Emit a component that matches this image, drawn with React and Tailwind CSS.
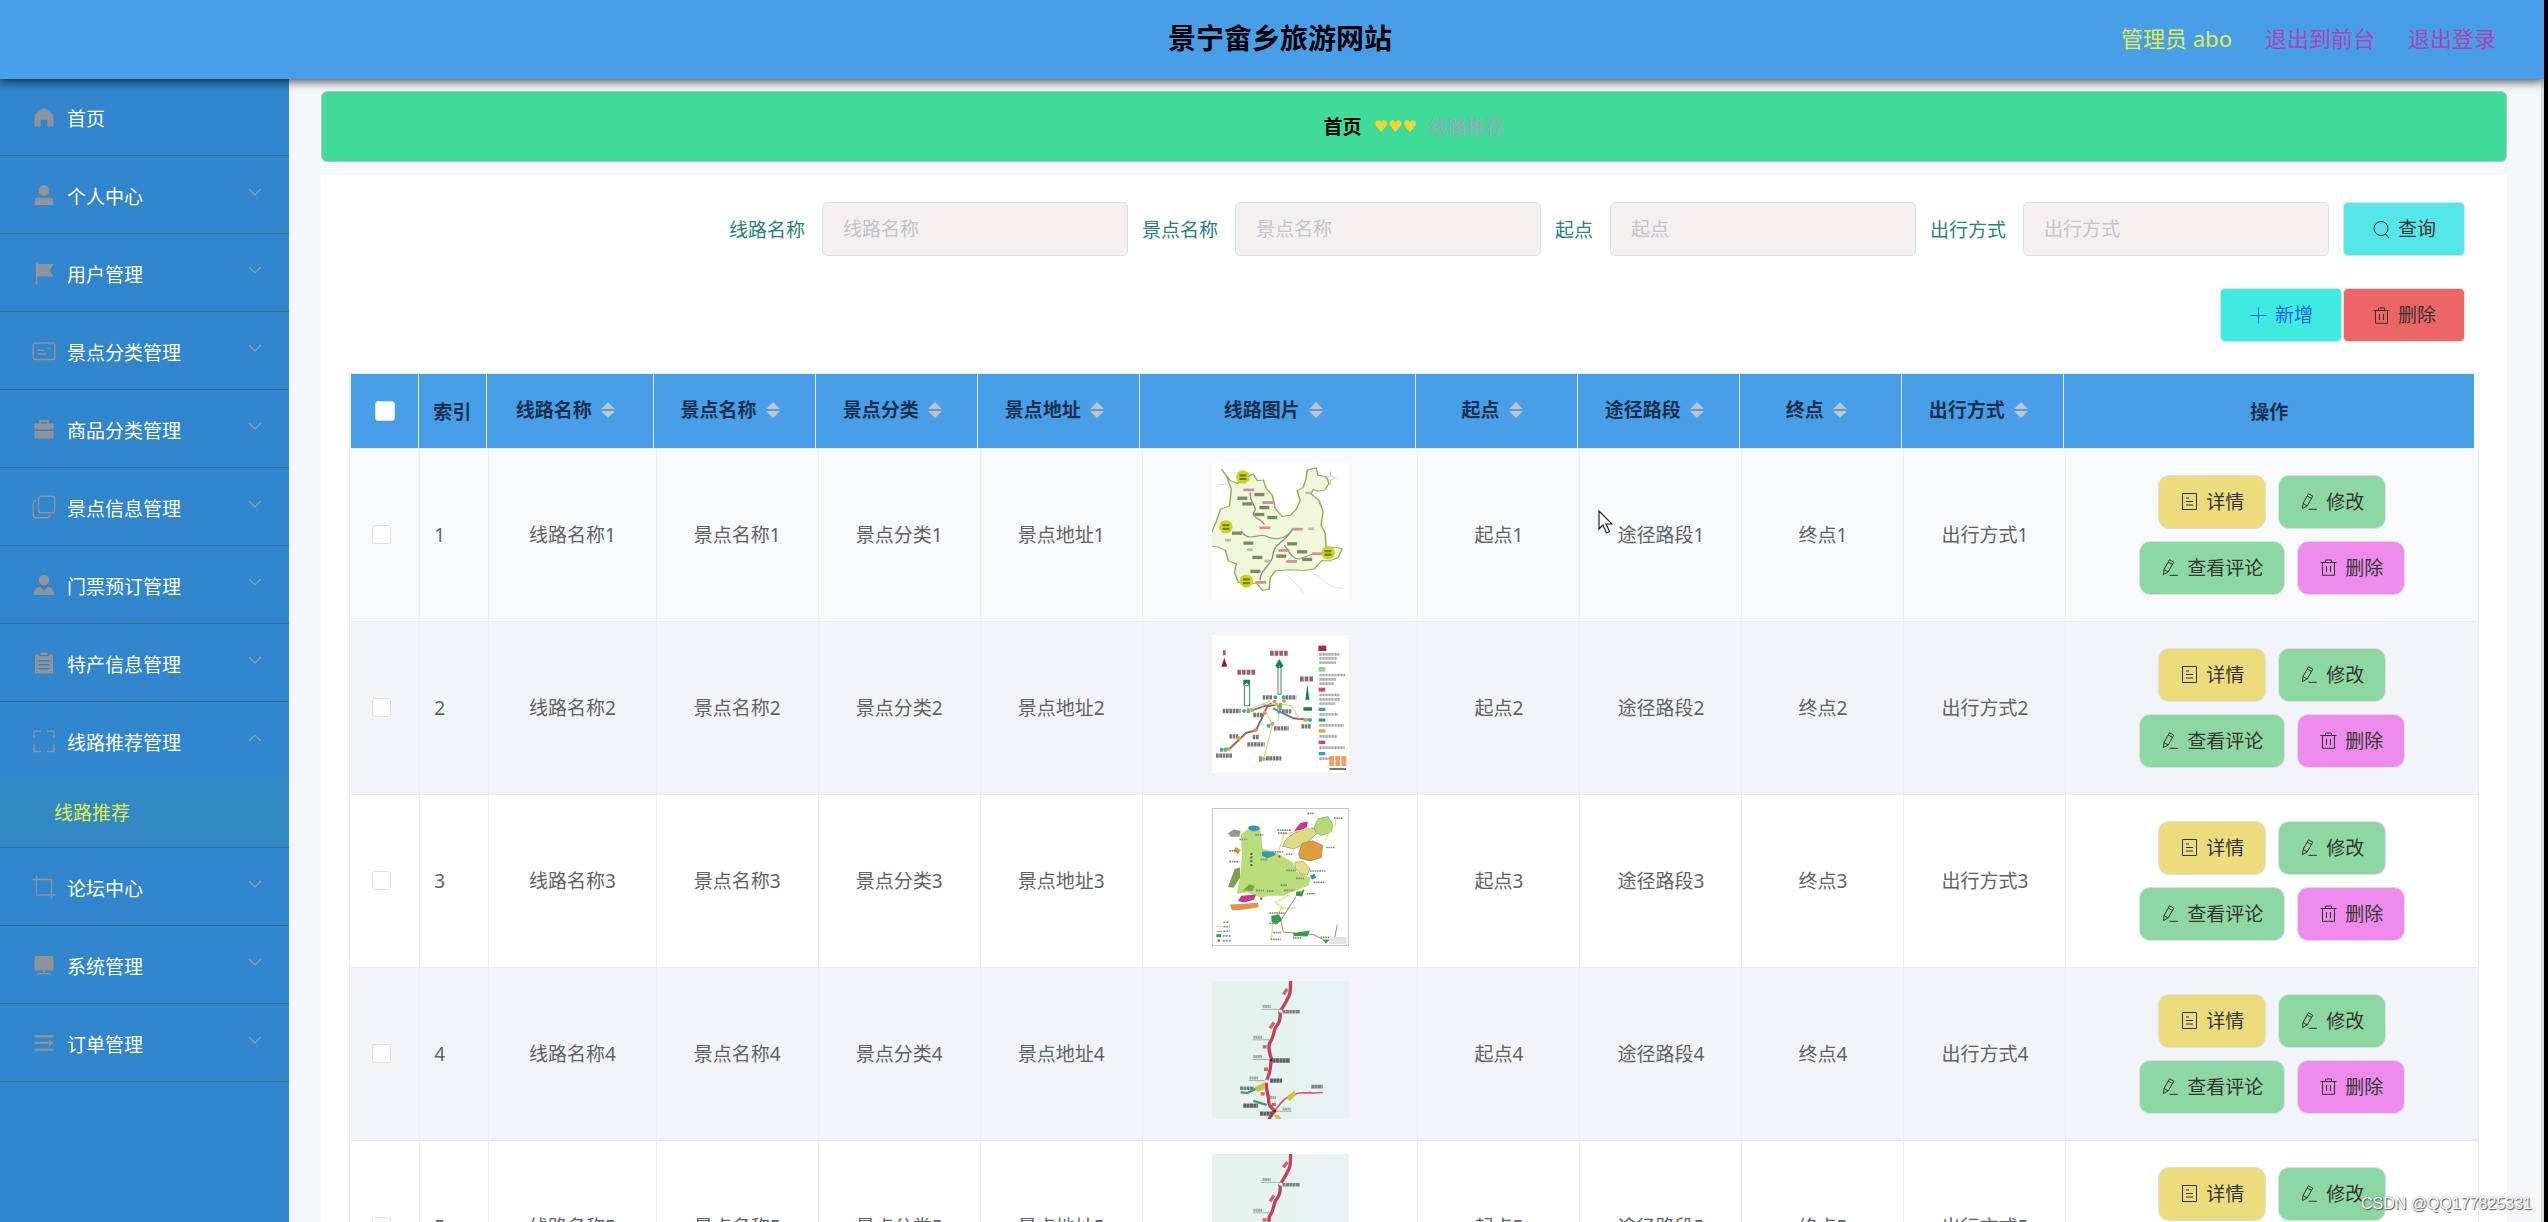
import React, { useState } from 'react';

const ICONS = {
  home: <path fill="currentColor" d="M12 2.5 21.5 10v11.5h-6.2v-6.8H8.700v6.800H2.500V10z" />,
  user: (
    <g fill="currentColor">
      <circle cx="12" cy="7.500" r="5.500" />
      <path d="M2.500 22v-3.500a4 4 0 0 1 4-4h11a4 4 0 0 1 4 4V22z" />
    </g>
  ),
  flag: <path fill="currentColor" d="M3.800 1.200h1.700V3h16l-3.800 6.500 3.800 6h-16v8H3.800z" />,
  postcard: (
    <g fill="none" stroke="currentColor" strokeWidth="1.400">
      <rect x="1.200" y="4" width="21.600" height="16.500" rx="2" />
      <path d="M6 11.200h6.500M6 15h9M15.500 9.200h3" />
    </g>
  ),
  briefcase: (
    <g fill="currentColor">
      <path d="M2.500 6.500H7V3h10v3.500h4.500v6h-19zM9 5v1.500h6V5z" fillRule="evenodd" />
      <path d="M2.500 14h19v7.500h-19z" />
    </g>
  ),
  copy: (
    <g fill="none" stroke="currentColor" strokeWidth="1.400">
      <rect x="6.500" y="1.200" width="16.200" height="16.500" rx="2.500" />
      <path d="M4.500 5.500c-2 0-3.200 1-3.200 2.800v11.400c0 2 1 3 3 3h10.500c2 0 3-1 3.200-2.500" />
    </g>
  ),
  custom: (
    <g fill="currentColor">
      <circle cx="12" cy="7" r="5.200" />
      <path d="M1.500 22c.3-4.500 2.800-7.600 6.300-8.600L12 17.500l4.200-4.100c3.500 1 6 4.100 6.300 8.600z" />
    </g>
  ),
  order: (
    <path
      fill="currentColor"
      fillRule="evenodd"
      d="M8.500 1.500h7V4h-7zM3 3.500h4.200v1.700h9.600V3.500H21v19H3zM6.500 9v1.500h11V9zM6.500 13v1.500h11V13zM6.500 17v1.500h11V17z"
    />
  ),
  fullscreen: (
    <path fill="none" stroke="currentColor" strokeWidth="1.500" d="M2 9V2.200h7M15 2.200h7V9M22 15.500v7h-7M9 22.500H2v-7" />
  ),
  crop: <path fill="none" stroke="currentColor" strokeWidth="1.400" d="M0.500 4.500h19V23.500M4.500 0.500v19.500h19" />,
  platform: <path fill="currentColor" d="M2.500 3h19v14.500h-19zM11 17.500h2v2.300h-2zM5.500 20h13v1.600h-13z" />,
  unfold: (
    <path fill="currentColor" d="M2.500 4h19v2.400h-19zM2.500 10.800h14V13h-14zM2.500 17.600h19V20h-19zM16.800 8.300l4.700 3.600-4.700 3.600z" />
  ),
};

const MENU = [
  { label: '首页', icon: 'home', leaf: true },
  { label: '个人中心', icon: 'user' },
  { label: '用户管理', icon: 'flag' },
  { label: '景点分类管理', icon: 'postcard' },
  { label: '商品分类管理', icon: 'briefcase' },
  { label: '景点信息管理', icon: 'copy' },
  { label: '门票预订管理', icon: 'custom' },
  { label: '特产信息管理', icon: 'order' },
  { label: '线路推荐管理', icon: 'fullscreen', children: ['线路推荐'] },
  { label: '论坛中心', icon: 'crop' },
  { label: '系统管理', icon: 'platform' },
  { label: '订单管理', icon: 'unfold' },
];

const FILTERS = ['线路名称', '景点名称', '起点', '出行方式'];

const COLUMNS = ['线路名称', '景点名称', '景点分类', '景点地址', '线路图片', '起点', '途径路段', '终点', '出行方式'];

const ROWS = [
  { id: 1, map: 'province', bg: 'bg-[#f8f9fd]' },
  { id: 2, map: 'transit', bg: 'bg-[#f3f4fa]' },
  { id: 3, map: 'park', bg: 'bg-white' },
  { id: 4, map: 'road', bg: 'bg-[#f3f4fa]' },
  { id: 5, map: 'road', bg: 'bg-white' },
];

const Icon = ({ name, className }) => (
  <svg viewBox="0 0 24 24" className={className} aria-hidden="true">{ICONS[name]}</svg>
);

const Chevron = ({ up }) => (
  <svg viewBox="0 0 14 8" className="mb-1.5 h-2 w-3.5 text-[#86a5c0]" fill="none" stroke="currentColor" strokeWidth="1.200" aria-hidden="true">
    {up ? <path d="M1 7l6-6 6 6" /> : <path d="M1 1l6 6 6-6" />}
  </svg>
);

// Thin line icons used inside buttons
const LINE_PATHS = {
  search: <><circle cx="9" cy="8.500" r="7" /><path d="M13.500 14l3.500 3.800" /></>,
  plus: <path d="M9.500 1.500v16M1.500 9.500h16" />,
  trash: <path d="M1.500 4.500h16M6.500 4.500V2h6v2.500M3.500 4.500v12.800h12V4.500M7.500 8v6M11.500 8v6" />,
  doc: <path d="M2.500 1.500h14v16h-14zM6 6h3M6 9.500h7M6 13h7" />,
  edit: <path d="M3 11.500 8.500 1.700l4.300 2.500-5.600 9.700-4.700 2.700zM7.200 4l4.300 2.500M3 11.500l4.200 2.400M8.500 17.300h8.500" />,
};

const LineIcon = ({ name }) => (
  <svg viewBox="0 0 19 19" className="h-[19px] w-[19px] shrink-0" fill="none" stroke="currentColor" aria-hidden="true">
    {LINE_PATHS[name]}
  </svg>
);

const ToolButton = ({ icon, className, children }) => (
  <button type="button" className={`flex h-[54px] items-center gap-[7px] rounded-[5px] border border-[#dcdfe6] px-7 ${className}`}>
    <LineIcon name={icon} />
    {children}
  </button>
);

const RowButton = ({ icon, className, children }) => (
  <button type="button" className={`flex h-[54px] items-center gap-[7px] rounded-[11px] border border-[#dcdfe6] px-[21px] text-[#333] ${className}`}>
    <LineIcon name={icon} />
    {children}
  </button>
);

// Blocks that stand for the tiny place labels on the maps
const Marks = ({ items, w, h, fill }) => items.map(([x, y], i) => (
  <rect key={i} x={x} y={y} width={w} height={h} fill={fill} />
));

const ProvinceMap = () => (
  <svg viewBox="185 332 275 415" preserveAspectRatio="none" className="h-full w-full" aria-hidden="true">
    <rect x="185" y="332" width="275" height="415" fill="#fff" />
    <path
      d="M222 388l14 8 12-14 20-14 8 20 12-2 6 26 12 20 6 40 14 24 16-4 12-18 8-26-6-30 12-10 6-26 2-26 18-6 4 22 16 4 6 20-8 20-16 4-8-6-4 14 16 20 8 34-4 40 8 24 2 42 20 0 12 6-8 26-18 10-14-2-16 26-20 4-30-2-28 4-10 20-2 34-14 4-12-22-16 4-20-6-8-30 4-26-16-8-6-32-14-10-20-4-4-20 8-14 12-40 8-36 18-10 4-50-10-40-10-20z"
      fill="#f0f7da" stroke="#86b45a" strokeWidth="3"
    />
    <path d="M262 424c-4 30 18 44 6 62 2 20 14 12 22 34M244 540c16 34 30 6 48 14 22 16 42 10 56-22-20 50-40 40-42 90-10 30-26 40-24 66M330 582c10 20 16 42 30 42l32-18" fill="none" stroke="#8f8f88" strokeWidth="3" />
    <path d="M336 672c10 20 24 30 32 54M390 668c16 10 20 40 58 44M198 400l24-2" fill="none" stroke="#c4c4c4" strokeWidth="1.500" />
    <Marks items={[[236, 436], [246, 453], [270, 425], [280, 464], [270, 485], [296, 494], [225, 541], [248, 571], [266, 614], [314, 610], [336, 573], [356, 597], [366, 620], [262, 656]]} w={20} h={10} fill="#7b8963" />
    <Marks items={[[248, 412], [286, 450], [280, 526], [345, 530], [318, 594], [334, 627], [385, 604], [272, 690]]} w={22} h={8} fill="#d68a9a" />
    <Marks items={[[211, 563], [255, 592], [372, 421], [378, 529], [290, 626]]} w={12} h={8} fill="#b8bdb0" />
    {[[247, 377], [213, 527], [418, 605], [254, 690]].map(([x, y]) => (
      <g key={x}>
        <ellipse cx={x} cy={y} rx="13.500" ry="20" fill="#ccd41c" />
        <path d={`M${x - 7} ${y - 5}h14M${x - 7} ${y + 6}h14`} stroke="#7a8018" strokeWidth="7" />
      </g>
    ))}
    <path d="M423 360v40M410 380h26" stroke="#aaa" strokeWidth="1.500" />
    <circle cx="423" cy="380" r="6" fill="#fff" stroke="#999" />
  </svg>
);

const TransitMap = () => (
  <svg viewBox="66 42 411 414" className="h-full w-full" preserveAspectRatio="none" aria-hidden="true">
    <rect x="66" y="42" width="411" height="414" fill="#fff" />
    <path d="M118 384l50-48 30-8 34-72 32-6M186 268l60-20M250 262l60 30 45 4" fill="none" stroke="#8b6a86" strokeWidth="6" />
    <path d="M222 408l26-98-34-60 60 0 30 4 24 40M264 262l2 40M180 264l60-24" fill="none" stroke="#c8cc7e" strokeWidth="3" />
    <path d="M163 194h16v60h-16zM264 140h9v80h-9z" fill="#fff" stroke="#3e8a64" strokeWidth="3" />
    <path d="M160 176h20v18l-10-8-10 8zM268 114l12 20-6 8-6-6-6 6-6-8zM352 190l6 46h-12zM340 259h26v10h-26z" fill="#14804c" />
    <path d="M103 110l9 27H94z" fill="#7c2630" />
    <path d="M240 97h56M142 154h54M330 174h42M99 95h8" stroke="#9a606a" strokeWidth="15" strokeDasharray="11 3" />
    <path d="M98 270h54M190 282h28M218 229h30M287 229h32M276 271h28M252 322h44M334 316h30M118 346h26M188 348h18M172 370h52M78 404h50M228 412h46" stroke="#777" strokeWidth="13" strokeDasharray="8 2" />
    <g fill="#e5a02c">
      {[[254, 242], [282, 240], [186, 268], [224, 276], [196, 328], [147, 352], [115, 384], [247, 308], [346, 297], [266, 258], [221, 414]].map(([x, y]) => (
        <circle key={x} cx={x} cy={y} r="6" />
      ))}
    </g>
    <g fill="#3f9ed0">
      {[[256, 229], [281, 229], [162, 270], [236, 314], [268, 272], [360, 297], [95, 386]].map(([x, y]) => (
        <circle key={x} cx={x} cy={y} r="6" />
      ))}
    </g>
    <path d="M106 380v12M271 246v22M211 406v16M175 262v14" stroke="#59b96b" strokeWidth="9" />
    <path d="M381 70v370" stroke="#ccc" strokeDasharray="4 4" />
    <path d="M388 100h60M388 112h54M388 125h50M388 162h78M388 175h50M388 188h44M388 222h60M388 235h62M388 248h48M388 280h56M388 313h74M388 346h54M388 380h76M388 413h36" stroke="#a8a8a8" strokeWidth="8" strokeDasharray="7 2" />
    <path d="M385 82h24" stroke="#923848" strokeWidth="16" />
    <path d="M386 145h20" stroke="#93d08a" strokeWidth="14" />
    <path d="M386 206h20" stroke="#d84b54" strokeWidth="12" />
    <path d="M386 265h20M386 398h20" stroke="#3d9cc4" strokeWidth="10" />
    <path d="M386 297h20" stroke="#3aa06a" strokeWidth="10" />
    <path d="M386 330h20" stroke="#dfa73d" strokeWidth="10" />
    <path d="M386 364h20" stroke="#cc3b96" strokeWidth="10" />
    <path d="M418 420h52" stroke="#efa066" strokeWidth="30" strokeDasharray="15 3" />
    <path d="M418 444h50" stroke="#777" strokeWidth="6" />
  </svg>
);

const ParkMap = () => (
  <svg viewBox="66 562 411 412" className="h-full w-full" preserveAspectRatio="none" aria-hidden="true">
    <rect x="67" y="563" width="409" height="410" fill="#fff" stroke="#bbb" strokeWidth="3" />
    <path d="M152 640l20-14 40-2 6 60 40 10 50 30 14 30 40 16-6 24-44 16-30 14-44 0-26 6-40-16-32 4 10-50 6-60z" fill="#b9dd78" />
    <path d="M278 676c14-36 40-40 60-50l36-4 6 16-30 30-40 16z" fill="#dcdc82" stroke="#8a8a5a" strokeWidth="2" />
    <path d="M372 620l12-26 30-6 14 24-4 22-30 10-16-8z" fill="#b4da78" stroke="#8aa05a" strokeWidth="2" />
    <path d="M326 700l10-32 32-8 30 14-4 36-34 10-30-8z" fill="#e29c40" stroke="#957443" strokeWidth="2" />
    <path d="M314 724l26-2 20 20-8 20-20-4-16-16z" fill="#dede8a" stroke="#999966" strokeWidth="2" />
    <path d="M312 630l20-24 22-4-4 18-26 12zM144 840l10-16 44-4-6 16-30 8z" fill="#cc3590" />
    <path d="M174 622c4-12 34-8 36 0-6 14-30 12-36 0zM216 692l36 0 4 10-24 10-16-8zM360 764l14-6 4 12-12 6z" fill="#3596bb" />
    <path d="M114 638l16-12 22 4-4 18-26 0z" fill="#97978c" />
    <path d="M130 690l8-12 14 10-8 12zM120 850l6 18 44-4 36-6-2-14-40 4z" fill="#dd9646" />
    <path d="M114 798l20-54 16-4 0 30-20 30zM158 808l20-18 16 4-6 16z" fill="#7f9f50" />
    <path d="M266 690l16-50 90-20M430 620c14-10 2-20 8-26M424 628l-20 30M300 820l-44 24 20 14-26 40-6 54M318 860l-50 0" fill="none" stroke="#e2e08a" strokeWidth="4" />
    <path d="M318 826l-46 72 8 34 40 4 50 4 40 20 24-10 8-40" fill="none" stroke="#a08f82" strokeWidth="3" />
    <path d="M318 812l24-2-6 16-18-2zM244 884l24-4 8 18-20 12-12-10zM308 936l52-8-8 18-40-2zM398 956l18-2-8 14z" fill="#2f9f45" />
    <path d="M184 696v44" stroke="#555" strokeWidth="6" strokeDasharray="6 5" />
    <path d="M352 578h20M432 592h26M262 628h42M264 637h26M196 642h24M148 656h24M118 690h26M118 722h30M408 680h28M254 693h28M288 700h20M212 716h22M288 748h30M360 750h48M370 784h34M318 772h24M272 792h20M230 810h22M198 808h24M282 808h32M350 818h26M238 876h46M238 906h26M250 934h24M308 950h26M242 954h30M392 948h30" stroke="#888" strokeWidth="5" strokeDasharray="5 2" />
    <g fill="#cf4a3c">
      <circle cx="214" cy="833" r="4" /><circle cx="268" cy="707" r="4" /><circle cx="340" cy="808" r="3" /><circle cx="86" cy="958" r="4" />
    </g>
    <path d="M80 916h16" stroke="#dddc7a" strokeWidth="3" />
    <path d="M80 930h16" stroke="#c08c80" strokeWidth="3" />
    <path d="M79 943h14" stroke="#2f9f45" strokeWidth="9" />
    <path d="M100 903h16M100 916h20M100 930h20M98 944h26M98 958h26" stroke="#888" strokeWidth="5" strokeDasharray="6 3" />
    <path d="M418 958h52" stroke="#e4e4e4" strokeWidth="22" />
  </svg>
);

const RoadMap = () => (
  <svg viewBox="66 60 411 413" className="h-full w-full" preserveAspectRatio="none" aria-hidden="true">
    <rect x="66" y="60" width="411" height="413" fill="#e6f2ed" />
    <rect x="320" y="60" width="157" height="413" fill="#e8f2f4" />
    <path d="M302 60c-2 24 2 36-8 50-10 22-14 26-24 42 2 24-2 34-14 48-6 14-4 28-18 48-4 20 2 30 6 44-2 24-2 42-14 66-4 20 2 32 6 54-2 16 4 24 18 36l-18 26" fill="none" stroke="#c4405a" strokeWidth="10" />
    <path d="M254 448c20-24 30-40 54-46 24-14 36-4 52-8 12 4 22-2 38 0" fill="none" stroke="#d2566c" strokeWidth="5" />
    <path d="M152 392c20 8 32-2 50-12M190 419l40 12" fill="none" stroke="#3d9e68" strokeWidth="7" />
    <path d="M194 378l28-14 4 18-24 10zM290 406l24-18 4 14-20 18zM252 460h14l8 13h-16z" fill="#d0c436" />
    <path d="M214 145h56M188 236h52M188 295h54M176 358h54M258 450h46" stroke="#8a918e" strokeWidth="2" />
    <path d="M218 136h24M190 228h26M190 286h26M178 350h26M278 443h24M240 409h18" stroke="#a3aaa7" strokeWidth="9" strokeDasharray="6 1" />
    <path d="M278 152h52M150 381h42M364 376h34" stroke="#7d8480" strokeWidth="11" strokeDasharray="9 1" />
    <path d="M248 298h52M240 358h36M160 433h44M210 457h36" stroke="#5e6361" strokeWidth="13" strokeDasharray="9 1" />
    <path d="M280 100l12-16M240 202l12-18M218 257h12M222 324h12M212 398h12M246 429h12" stroke="#c66a70" strokeWidth="10" />
    <circle cx="272" cy="150" r="5" fill="#fff" />
    <circle cx="230" cy="360" r="5" fill="#fff" />
    <circle cx="243" cy="297" r="4" fill="#333" />
    <circle cx="254" cy="450" r="4" fill="#333" />
  </svg>
);

const MAPS = { province: ProvinceMap, transit: TransitMap, park: ParkMap, road: RoadMap };

const Header = () => (
  <header className="relative z-10 grid h-[79px] shrink-0 grid-cols-[1fr_auto_1fr] items-center bg-[#489fe8] pb-1 pr-12 pl-16 shadow-[0_2px_10px_rgba(0,0,0,0.75)]">
    <h1 className="col-start-2 text-[28px] font-bold text-black">景宁畲乡旅游网站</h1>
    <div className="flex items-center justify-end gap-[33px] text-[22px] text-[#a845b5]">
      <span className="text-[#e0ef50]">管理员 abo</span>
      <a href="#front">退出到前台</a>
      <a href="#logout">退出登录</a>
    </div>
  </header>
);

const Sidebar = () => (
  <nav className="-mt-px w-[289px] shrink-0 overflow-hidden bg-[#3085cc] text-white">
    <ul>
      {MENU.map((item) => (
        <li key={item.label} className="border-b border-[#2f7180]">
          <a href="#menu" className="flex h-[77px] items-center pr-[27px] pl-8">
            <Icon name={item.icon} className="h-6 w-6 text-[#909399]" />
            <span className="ml-[11px] flex-1 pt-1">{item.label}</span>
            {!item.leaf && <Chevron up={Boolean(item.children)} />}
          </a>
          {item.children?.map((child) => (
            <a key={child} href="#route" className="flex h-[68px] items-center bg-[#3288c3] pl-[54px] text-[#e0ef50]">
              {child}
            </a>
          ))}
        </li>
      ))}
    </ul>
  </nav>
);

const SortCarets = () => (
  <svg viewBox="0 0 14 16" className="mx-[9px] h-4 w-3.5" fill="#c0c4cc" aria-hidden="true">
    <path d="M7 0l7 7H0zM7 16l7-7H0z" />
  </svg>
);

const RouteTable = () => {
  const [selected, setSelected] = useState([]);

  const toggle = (id) => {
    setSelected(selected.includes(id) ? selected.filter((s) => s !== id) : [...selected, id]);
  };
  const toggleAll = () => {
    setSelected(selected.length === ROWS.length ? [] : ROWS.map((r) => r.id));
  };

  const boxClass = 'block appearance-none rounded-[3px] border border-[#dcdfe6] bg-white checked:bg-[#409eff]';

  return (
    <div className="border border-[#ebeef5] pl-px">
      <table className="w-full table-fixed border-r-4 border-white text-[#17304f]">
        <colgroup>
          <col className="w-[50px]" />
          <col className="w-[50px]" />
          <col className="w-[124px]" />
          <col className="w-[120px]" span="3" />
          <col className="w-[204px]" />
          <col className="w-[120px]" span="4" />
          <col className="w-[305px]" />
        </colgroup>
        <thead>
          <tr className="h-[74px] divide-x divide-[#ebeef5] border-b border-[#ebeef5] bg-[#489fe8]">
            <th>
              <input
                type="checkbox"
                aria-label="全选"
                checked={selected.length === ROWS.length}
                onChange={toggleAll}
                className={`mx-auto h-5 w-5 ${boxClass}`}
              />
            </th>
            <th className="pt-0.5 font-bold">索引</th>
            {COLUMNS.map((c) => (
              <th key={c} className="font-bold">
                <div className="flex items-center justify-center pb-px">
                  {c}
                  <SortCarets />
                </div>
              </th>
            ))}
            <th className="pt-0.5 font-bold">操作</th>
          </tr>
        </thead>
      </table>
      <table className="w-full table-fixed text-center text-[#606266]">
        <colgroup>
          <col className="w-[51px]" />
          <col className="w-[51px]" />
          <col className="w-[124px]" />
          <col className="w-[120px]" span="3" />
          <col className="w-[204px]" />
          <col className="w-[120px]" span="4" />
          <col className="w-[305px]" />
        </colgroup>
        <tbody>
          {ROWS.map((row) => {
            const RouteMap = MAPS[row.map];
            return (
              <tr key={row.id} className={`divide-x divide-[#ebeef5] border-b border-[#e6e9f0] ${row.bg}`}>
                <td>
                  <input
                    type="checkbox"
                    aria-label={`选择 ${row.id}`}
                    checked={selected.includes(row.id)}
                    onChange={() => toggle(row.id)}
                    className={`ml-[21px] h-[19px] w-[19px] ${boxClass}`}
                  />
                </td>
                <td className="pl-3.5 text-left">{row.id}</td>
                {COLUMNS.map((c) => (
                  <td key={c}>
                    {c === '线路图片' ? (
                      <div className="mx-auto mt-[13px] mb-[21px] h-[138px] w-[137px]">
                        <RouteMap />
                      </div>
                    ) : `${c}${row.id}`}
                  </td>
                ))}
                <td>
                  <div className="flex flex-col gap-3">
                    <div className="flex justify-center gap-3">
                      <RowButton icon="doc" className="bg-[#ecdc7c]">详情</RowButton>
                      <RowButton icon="edit" className="bg-[#8dd8a2]">修改</RowButton>
                    </div>
                    <div className="flex justify-center gap-3">
                      <RowButton icon="edit" className="bg-[#8dd8a2]">查看评论</RowButton>
                      <RowButton icon="trash" className="bg-[#ee8bec]">删除</RowButton>
                    </div>
                  </div>
                </td>
              </tr>
            );
          })}
        </tbody>
      </table>
    </div>
  );
};

const App = () => (
  <div className="relative flex h-screen flex-col overflow-hidden border-r-4 border-black bg-[#f5f7fb] font-['Noto_Sans','Noto_Sans_CJK_SC',sans-serif] text-[19px] leading-7">
    <Header />
    <div className="flex min-h-0 flex-1">
      <Sidebar />
      <main className="min-w-0 flex-1 overflow-y-auto border-r-[3px] border-[#d8dade] pt-3 pr-[34px] pl-8 [scrollbar-width:none]">
        {/* Breadcrumb */}
        <div className="flex h-[71px] items-center justify-center gap-3 rounded-[6px] border border-[#b4c4bf] bg-[#3edc98]">
          <a href="#home" className="font-bold text-black">首页</a>
          <span className="font-['DejaVu_Sans',sans-serif] text-[16px] text-[#f3d430]">♥♥♥</span>
          <span className="text-[#95aabb]">线路推荐</span>
        </div>

        <section className="mt-[13px] bg-white px-7 pt-[27px] pb-7">
          <form className="flex flex-wrap justify-end gap-3.5 pr-3.5" onSubmit={(e) => e.preventDefault()}>
            {FILTERS.map((f) => (
              <div key={f} className="flex items-center gap-[17px]">
                <label htmlFor={f} className="pt-0.5 text-[#2b8080]">{f}</label>
                <input
                  id={f}
                  type="text"
                  placeholder={f}
                  className="h-[54px] w-[306px] rounded-[5px] border border-[#dcdfe6] bg-[#f5eff0] px-5 text-[#606266] placeholder:text-[#c0c4cc]"
                />
              </div>
            ))}
            <ToolButton icon="search" className="bg-[#55e6ea] text-[#333]">查询</ToolButton>
          </form>
          <div className="mt-8 mb-[31px] flex justify-end gap-px pr-3.5">
            <ToolButton icon="plus" className="bg-[#3eebe1] text-[#1f62dc]">新增</ToolButton>
            <ToolButton icon="trash" className="bg-[#ed6564] text-[#333]">删除</ToolButton>
          </div>
          <RouteTable />
        </section>
      </main>
    </div>

    {/* Mouse pointer */}
    <svg viewBox="0 0 15 24" className="absolute top-[510px] left-[1598px] h-6 w-[15px]" aria-hidden="true">
      <path d="M1 1v18l4-4 3.500 8 3-1.500L8 14h6z" fill="#fff" stroke="#222" strokeWidth="1.200" />
    </svg>
    <span className="absolute right-3 bottom-1 font-['Liberation_Sans',sans-serif] text-[16px] text-white [text-shadow:1px_1px_1px_#555,0_0_2px_#888]">
      CSDN @QQ177825331
    </span>
  </div>
);

export default App;
